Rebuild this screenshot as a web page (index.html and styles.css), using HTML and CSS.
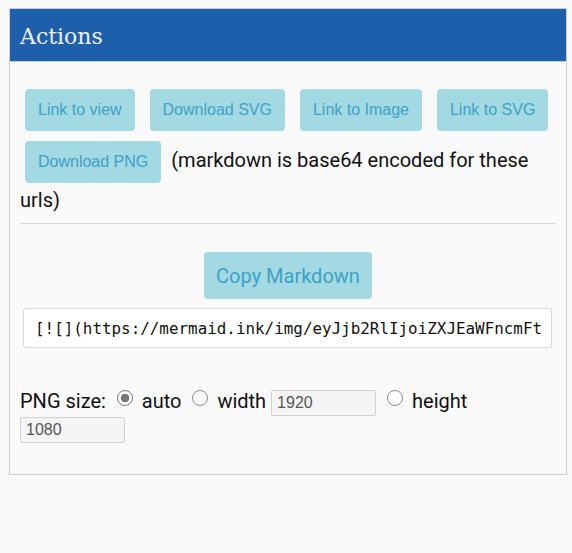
FILE: index.html
```html
<!DOCTYPE html>
<html>
<head>
<meta charset="utf-8">
<link rel="stylesheet" href="styles.css">
</head>
<body>
<div class="card">
  <div class="card-header">Actions</div>
  <div class="card-body">
    <p class="links"><button class="btn">Link to view</button> <button class="btn">Download SVG</button> <button class="btn">Link to Image</button> <button class="btn">Link to SVG</button> <button class="btn">Download PNG</button> (markdown is base64 encoded for these urls)</p>
    <hr class="sep">
    <div class="copy-row"><button class="btn btn-big">Copy Markdown</button></div>
    <input class="md" type="text" value="[![](https://mermaid.ink/img/eyJjb2RlIjoiZXJEaWFncmFt">
    <p class="png">PNG size: <input type="radio" class="radio" name="s" checked> auto <input type="radio" class="radio" name="s"> width <input class="num" type="text" value="1920"> <input type="radio" class="radio" name="s"> height <input class="num" type="text" value="1080"></p>
  </div>
</div>
</body>
</html>
```
FILE: styles.css
```css
html, body {
  background: #fafafa;
}
body {
  margin: 8px 5px 0 9px;
  font-family: Roboto, "Liberation Sans", sans-serif;
  font-size: 20px;
  color: #111;
}
.card {
  border: 1px solid #cfcfcf;
  width: 556px;
  background: #fafafa;
}
.card-header {
  background: #1e5fab;
  color: #eef2f8;
  font-family: "DejaVu Serif", serif;
  font-size: 22px;
  height: 49px;
  padding: 3px 10px 0;
  line-height: 50px;
  border-bottom: 1px solid #d0d0d0;
}
.card-body {
  padding: 10px 10px 11px;
}
.links {
  margin: 12px 0 0;
}
.btn {
  font-family: "Liberation Sans", Arial, sans-serif;
  font-size: 16px;
  color: #3ca2c6;
  background: #a3d9e3;
  border: none;
  border-radius: 4px;
  height: 42px;
  padding: 0 13px;
  margin: 5px;
  vertical-align: middle;
}
.sep {
  border: none;
  border-top: 1px solid #d6d6d6;
  margin: 11px 0 0;
}
.copy-row {
  text-align: center;
  margin-top: 28px;
}
.btn-big {
  font-family: Roboto, sans-serif;
  font-size: 20px;
  height: 47px;
  padding: 0 12px;
  margin: 0;
}
.md {
  display: block;
  box-sizing: border-box;
  width: 529px;
  height: 40px;
  margin: 9px 0 0 3px;
  border: 1px solid #d8d8d8;
  border-radius: 3px;
  background: #fff;
  font-family: "DejaVu Sans Mono", monospace;
  font-size: 15.9px;
  padding: 0 10px 0 11px;
  color: #111;
}
.png {
  margin: 40px 0 20px;
  line-height: 27px;
}
.radio {
  appearance: none;
  width: 16px;
  height: 16px;
  border: 1px solid #8a8a8a;
  border-radius: 50%;
  background: #fff;
  margin: 0 4px 0 6px;
  vertical-align: 2px;
  box-sizing: border-box;
}
.radio:checked {
  border-color: #777;
  background: radial-gradient(circle, #777 0 4px, #fff 4.6px);
}
.num {
  box-sizing: border-box;
  width: 105px;
  height: 26px;
  border: 1px solid #d0d0d0;
  border-radius: 2px;
  background: #f4f4f4;
  font-family: "Liberation Sans", Arial, sans-serif;
  font-size: 16px;
  color: #555;
  padding: 0 5px;
  vertical-align: middle;
}
```
